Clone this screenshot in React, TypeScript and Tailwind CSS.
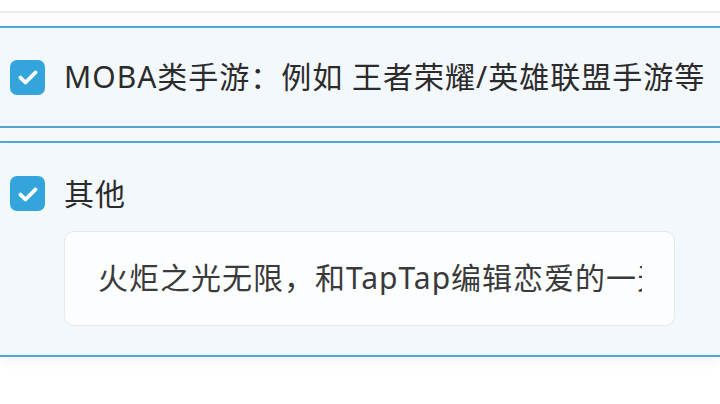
import React from 'react';

const font = { fontFamily: '"Noto Sans", "Noto Sans CJK SC", sans-serif' };

const CheckBox: React.FC = () => (
  <div className="w-[35px] h-[35px] rounded-[7px] bg-[#33a5dc] flex items-center justify-center shrink-0">
    <svg width="26" height="26" viewBox="0 0 24 24" fill="none">
      <path d="M5 12.5l4.6 4.6L19 7.8" stroke="#fff" strokeWidth="3.5" strokeLinecap="round" strokeLinejoin="round" />
    </svg>
  </div>
);

export default function App() {
  return (
    <div className="w-[720px] h-[404px] bg-white overflow-hidden" style={font}>
      <div className="h-[11px] bg-white" />
      <div className="h-[2px] bg-[#ececec]" />
      <div className="h-[13px] bg-[#fdfdfd]" />

      {/* MOBA */}
      <div className="h-[102px] border-y-2 border-[#4fa8d3] bg-[#f3f8fc] flex items-center pl-[10px]">
        <CheckBox />
        <span className="ml-[19px] text-[30px] leading-none text-[#2b2b2b] whitespace-nowrap tracking-[1px]">
          MOBA类手游：例如 王者荣耀/英雄联盟手游等
        </span>
      </div>

      <div className="h-[13px] bg-[#f6f9fb]" />

      {/* 其他 */}
      <div className="h-[216px] border-y-2 border-[#4fa8d3] bg-[#f3f8fc] pl-[10px] pt-[33px] shadow-[0_6px_10px_rgba(0,0,0,0.04)]">
        <div className="flex items-center">
          <CheckBox />
          <span className="ml-[19px] text-[30px] leading-none text-[#2b2b2b] tracking-[1px]">其他</span>
        </div>
        <div className="mt-[20px] ml-[54px] w-[611px] h-[95px] rounded-[10px] border border-[#e6e8ea] bg-[#fcfdfe] flex items-center pl-[33px] pr-[32px]">
          <div className="flex-1 overflow-hidden">
            <span className="text-[30px] leading-none text-[#3a3a3a] whitespace-nowrap tracking-[1px]">
              火炬之光无限，和TapTap编辑恋爱的一天
            </span>
          </div>
        </div>
      </div>
    </div>
  );
}
